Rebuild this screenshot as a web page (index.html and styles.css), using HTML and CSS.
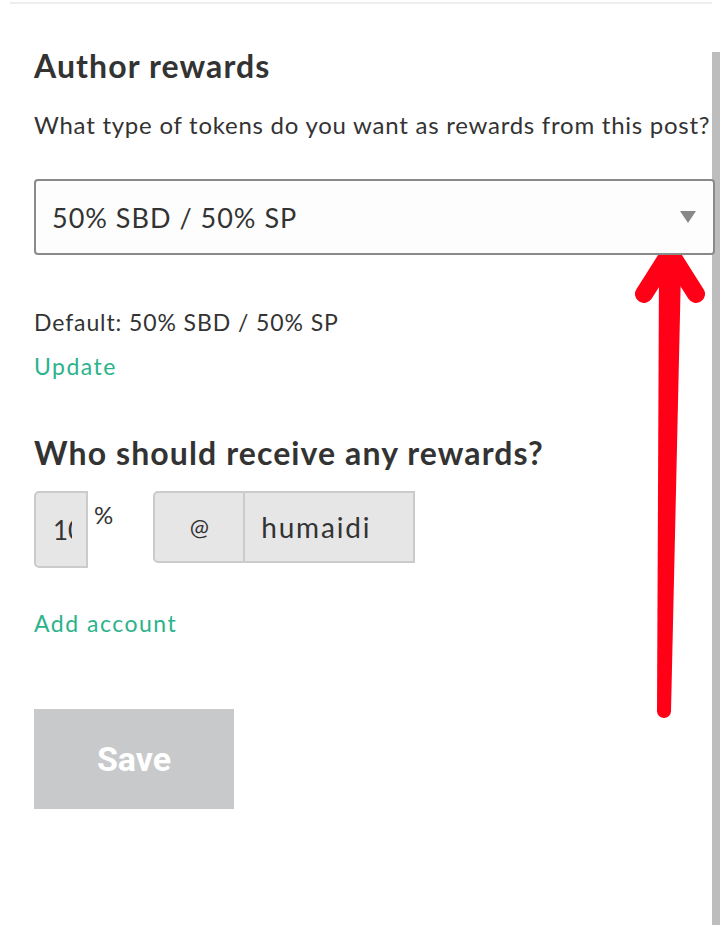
FILE: index.html
```html
<!DOCTYPE html>
<html>
<head>
    <title>Post Rewards</title>
    <link rel="stylesheet" href="styles.css">
</head>
<body>
    <div class="page">
        <div class="content">
            <div class="top-rule"></div>

            <h2 class="section-title">Author rewards</h2>
            <p class="question">What type of tokens do you want as rewards from this post?</p>

            <div class="select-box">
                <span class="select-value">50% SBD / 50% SP</span>
                <span class="select-arrow"></span>
            </div>

            <p class="default-text">Default: 50% SBD / 50% SP</p>
            <a class="link" href="#">Update</a>

            <h2 class="section-title who-title">Who should receive any rewards?</h2>

            <div class="beneficiary-row">
                <div class="pct-input"><span class="pct-value">10</span></div>
                <span class="pct-sign">%</span>
                <div class="account-group">
                    <span class="at-cell">@</span>
                    <span class="account-name">humaidi</span>
                </div>
            </div>

            <a class="link add-account" href="#">Add account</a>

            <button class="save-btn" disabled>Save</button>
        </div>
        <div class="scrollbar"></div>
    </div>

    <!-- red annotation arrow drawn over the screenshot -->
    <svg class="annotation" width="720" height="925" viewBox="0 0 720 925">
        <polygon points="659,270 681,270 671,712 657,712" fill="#ff0016"/>
        <circle cx="664" cy="711" r="7" fill="#ff0016"/>
        <polyline points="644,294 670,253 696,294" fill="none" stroke="#ff0016" stroke-width="18" stroke-linecap="round" stroke-linejoin="round"/>
    </svg>
</body>
</html>
```

FILE: styles.css
```css
body {
    margin: 0;
    padding: 0;
    background-color: #fff;
    font-family: Lato, "Noto Sans", sans-serif;
    color: #333;
    position: relative;
    overflow: hidden;
}

.page {
    display: flex;
    width: 720px;
    height: 925px;
}

.content {
    flex: 1;
    padding-left: 34px;
    min-width: 0;
}

.scrollbar {
    width: 8px;
    margin-top: 52px;
    background-color: #bdbdbd;
}

.top-rule {
    height: 2px;
    margin: 2px 0 0 -24px;
    background-color: #eee;
}

.section-title {
    margin: 42px 0 0;
    font-size: 32px;
    line-height: 40px;
    font-weight: bold;
    letter-spacing: 1.1px;
    color: #333;
}

.question {
    margin: 23px 0 0;
    font-size: 24px;
    line-height: 32px;
    letter-spacing: 0.75px;
    white-space: nowrap;
}

.select-box {
    position: relative;
    z-index: 1;
    display: flex;
    align-items: center;
    justify-content: space-between;
    box-sizing: border-box;
    width: 681px;
    height: 76px;
    margin-top: 38px;
    padding: 0 17px 0 16px;
    border: 2px solid #8a8a8a;
    border-radius: 4px;
    background-color: #fdfdfd;
}

.select-value {
    font-size: 27px;
    letter-spacing: 1px;
}

.select-arrow {
    width: 0;
    height: 0;
    border-left: 8px solid transparent;
    border-right: 8px solid transparent;
    border-top: 12px solid #888;
}

.default-text {
    margin: 52px 0 0;
    font-size: 23px;
    line-height: 30px;
    letter-spacing: 0.9px;
}

.link {
    display: block;
    margin-top: 14px;
    font-size: 23px;
    line-height: 30px;
    letter-spacing: 1.5px;
    color: #2bb38b;
    text-decoration: none;
}

.who-title {
    margin-top: 52px;
}

.beneficiary-row {
    display: flex;
    align-items: flex-start;
    margin-top: 18px;
}

.pct-input {
    box-sizing: border-box;
    width: 54px;
    height: 77px;
    padding-left: 17px;
    display: flex;
    align-items: center;
    border: 2px solid #cbcbcb;
    border-radius: 5px 0 0 5px;
    background-color: #e6e6e6;
    font-size: 26px;
}

.pct-value {
    display: block;
    width: 19px;
    overflow: hidden;
    white-space: nowrap;
}

.pct-sign {
    margin: 9px 0 0 6px;
    font-size: 24px;
    line-height: 30px;
}

.account-group {
    display: flex;
    box-sizing: border-box;
    width: 262px;
    height: 72px;
    margin-left: 40px;
    border: 2px solid #cbcbcb;
    border-radius: 5px 0 0 5px;
    background-color: #e6e6e6;
}

.at-cell {
    width: 88px;
    display: flex;
    align-items: center;
    justify-content: center;
    border-right: 2px solid #cbcbcb;
    font-size: 23px;
}

.account-name {
    display: flex;
    align-items: center;
    padding-left: 16px;
    font-size: 28px;
    letter-spacing: 1.8px;
}

.add-account {
    margin-top: 40px;
}

.save-btn {
    display: block;
    width: 200px;
    height: 100px;
    margin-top: 71px;
    border: none;
    background-color: #c8c9cb;
    color: #fff;
    font-family: Roboto, sans-serif;
    font-size: 34px;
    font-weight: bold;
}

.annotation {
    position: absolute;
    top: 0;
    left: 0;
    pointer-events: none;
}
```
